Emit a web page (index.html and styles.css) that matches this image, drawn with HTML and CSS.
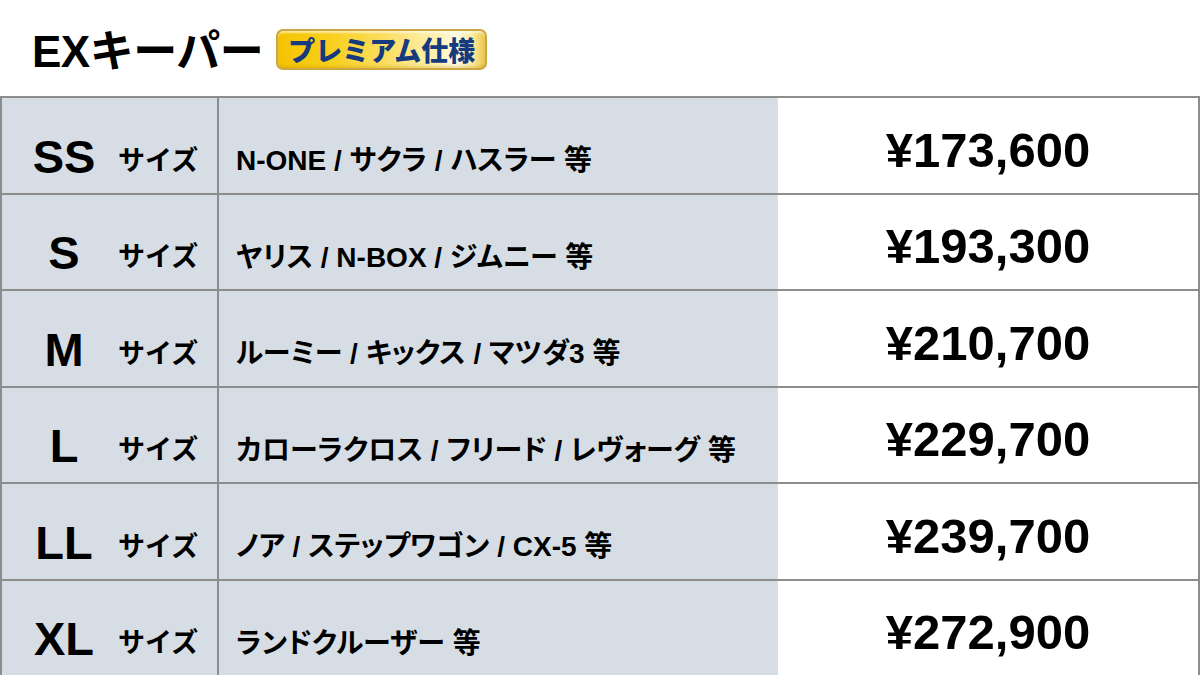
FILE: index.html
```html
<!DOCTYPE html>
<html lang="ja">
<head>
<meta charset="utf-8">
<title>EXキーパー プレミアム仕様</title>
<link rel="stylesheet" href="styles.css">
</head>
<body>
<header class="head">
  <h1 class="title">EXキーパー</h1>
  <span class="badge">プレミアム仕様</span>
</header>
<div class="table">
  <div class="row">
    <div class="size"><span class="code">SS</span><span class="unit">サイズ</span></div>
    <div class="cars">N-ONE / サクラ / ハスラー 等</div>
    <div class="price">¥173,600</div>
  </div>
  <div class="row">
    <div class="size"><span class="code">S</span><span class="unit">サイズ</span></div>
    <div class="cars">ヤリス / N-BOX / ジムニー 等</div>
    <div class="price">¥193,300</div>
  </div>
  <div class="row">
    <div class="size"><span class="code">M</span><span class="unit">サイズ</span></div>
    <div class="cars">ルーミー / キックス / マツダ3 等</div>
    <div class="price">¥210,700</div>
  </div>
  <div class="row">
    <div class="size"><span class="code">L</span><span class="unit">サイズ</span></div>
    <div class="cars">カローラクロス / フリード / レヴォーグ 等</div>
    <div class="price">¥229,700</div>
  </div>
  <div class="row">
    <div class="size"><span class="code">LL</span><span class="unit">サイズ</span></div>
    <div class="cars">ノア / ステップワゴン / CX-5 等</div>
    <div class="price">¥239,700</div>
  </div>
  <div class="row">
    <div class="size"><span class="code">XL</span><span class="unit">サイズ</span></div>
    <div class="cars">ランドクルーザー 等</div>
    <div class="price">¥272,900</div>
  </div>
</div>
</body>
</html>
```

FILE: styles.css
```css
* { box-sizing: border-box; }
html, body { margin: 0; padding: 0; }
body {
  width: 1200px;
  height: 675px;
  overflow: hidden;
  background: #ffffff;
  color: #000;
  font-family: "Liberation Sans", "Noto Sans CJK JP", sans-serif;
}
.head {
  height: 96px;
  display: flex;
  align-items: center;
  padding: 8px 0 0 32px;
  gap: 13px;
}
.title {
  margin: 0;
  font-size: 44px;
  font-weight: 700;
  letter-spacing: -0.5px;
  line-height: 1;
}
.badge {
  display: inline-flex;
  align-items: center;
  justify-content: center;
  width: 211px;
  height: 41px;
  margin-top: -6px;
  border: 2px solid #cda744;
  border-radius: 7px;
  background: linear-gradient(90deg, #f4c400 0%, #f8cf1c 25%, #fbe06a 55%, #fef3b8 78%, #fffbe4 86%, #fbeba0 94%, #ecc64a 100%);
  box-shadow: inset 0 -2px 3px rgba(190,140,0,0.3), inset 0 2px 2px rgba(255,255,255,0.6);
  color: #163a7e;
  font-family: "Noto Sans CJK JP", sans-serif;
  font-weight: 900;
  font-size: 27px;
  line-height: 1;
}
.table {
  border-top: 2px solid #8d8d8d;
  border-left: 2px solid #8d8d8d;
  border-right: 2px solid #8d8d8d;
}
.row {
  display: grid;
  grid-template-columns: 217px 559px 1fr;
  height: 96.5px;
  border-bottom: 2px solid #8d8d8d;
}
.size {
  display: flex;
  align-items: center;
  padding-top: 22px;
  background: #d6dde5;
  border-right: 2px solid #8d8d8d;
}
.code {
  width: 116px;
  padding-left: 8px;
  text-align: center;
  font-size: 47px;
  font-weight: 700;
}
.unit {
  font-family: "Noto Sans CJK JP", sans-serif;
  font-weight: 700;
  font-size: 27px;
  padding-top: 4px;
}
.cars {
  display: flex;
  align-items: center;
  padding: 26px 0 0 17px;
  background: #d6dde5;
  font-size: 28px;
  font-weight: 700;
  font-feature-settings: "palt";
  white-space: nowrap;
}
.price {
  display: flex;
  align-items: center;
  justify-content: center;
  padding-top: 9px;
  background: #fff;
  font-size: 49px;
  font-weight: 700;
}
```
